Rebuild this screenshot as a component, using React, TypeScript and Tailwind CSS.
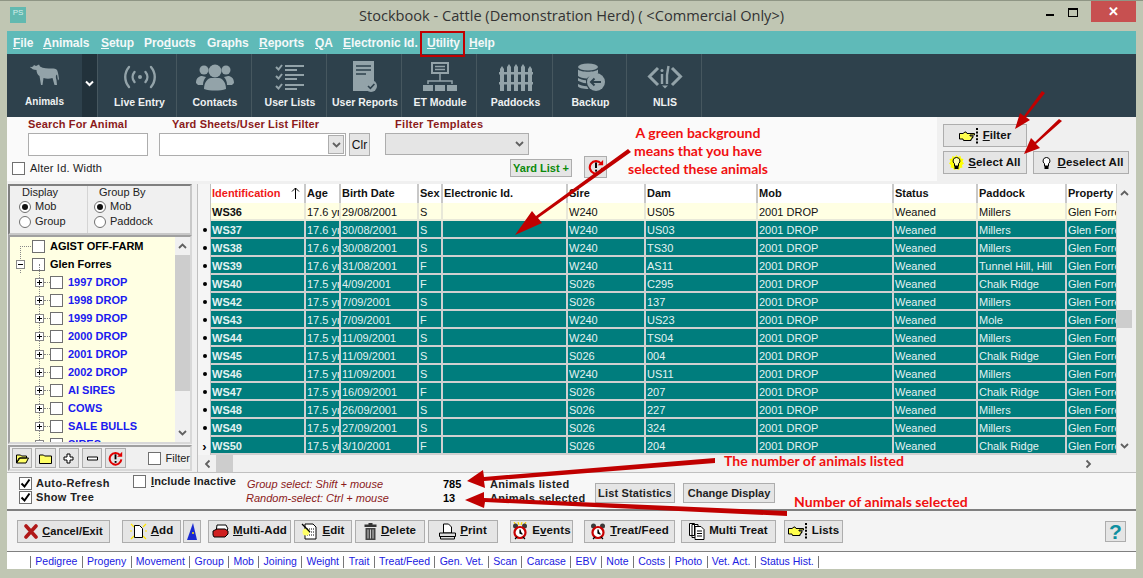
import React from "react";

const ICON = "#93a3a9";

function Cow() {
  return (
    <svg width="30" height="24" viewBox="0 0 30 24">
      <path fill={ICON} d="M0 3.500l3-1 1-1.500 2 1 3-1.500 1 2c3 2 8 2 12 2 2 0 4 0 5 1.500 1 2 1.500 5 2 9l-1 1.500-1-6-1 1c-.3 2 0 3 .5 4.500l.5 5h-2.500l-2-7c-3 1-6 1-9 0l-1 7H11l-1.500-9c-2-1-3-4-3-6-3 0-5-1-6.500-3.500z" />
    </svg>
  );
}
function Live() {
  return (
    <svg width="34" height="28" viewBox="0 0 34 28" fill="none" stroke={ICON} strokeWidth="2.4" strokeLinecap="round">
      <circle cx="17" cy="14" r="2" fill={ICON} stroke="none" />
      <path d="M11.500 9c-2.500 3-2.500 7 0 10M22.500 9c2.500 3 2.500 7 0 10" />
      <path d="M6 4c-5 6-5 14 0 20M28 4c5 6 5 14 0 20" />
    </svg>
  );
}
function Contacts() {
  return (
    <svg width="38" height="28" viewBox="0 0 38 28" fill={ICON}>
      <circle cx="8" cy="7" r="4.500" />
      <circle cx="30" cy="7" r="4.500" />
      <path d="M0 20c0-5 3-7 6-7l4 1c-2 2-3 5-3 8H2zM38 20c0-5-3-7-6-7l-4 1c2 2 3 5 3 8h5z" />
      <circle cx="19" cy="8" r="6.500" />
      <path d="M8 26c0-7 4-11 7-11h8c3 0 7 4 7 11-6 2-16 2-22 0z" />
    </svg>
  );
}
function UserLists() {
  return (
    <svg width="30" height="28" viewBox="0 0 30 28" fill="none" stroke={ICON} strokeWidth="1.800">
      <path d="M1 4l2.500 2.500L7 2M1 13l2.500 2.500L7 11M1 23l2.500 2.500L7 21" strokeWidth="2" />
      <path d="M10 3h19M10 7h12M10 12h19M10 16h12M10 22h19M10 26h12" />
    </svg>
  );
}
function UserReports() {
  return (
    <svg width="24" height="32" viewBox="0 0 24 32">
      <path fill={ICON} d="M0 0h21v20a8 8 0 0 0-6 10H0z" />
      <path stroke="#2e414c" strokeWidth="1.600" d="M3 5h15M3 9h15M3 13h10" />
      <circle cx="18" cy="25" r="6" fill={ICON} />
      <path fill="none" stroke="#2e414c" strokeWidth="1.600" d="M15 25l2.400 2.400 4-4.400" />
    </svg>
  );
}
function Et() {
  return (
    <svg width="34" height="30" viewBox="0 0 34 30">
      <rect x="9" y="1" width="16" height="10" fill="none" stroke={ICON} strokeWidth="2" />
      <path stroke={ICON} strokeWidth="1.400" d="M12 4.500h10M12 7.500h10" />
      <path fill="none" stroke={ICON} strokeWidth="1.500" d="M17 11v8M5 22v-3h24v3" />
      <rect x="0" y="23" width="10" height="6" fill={ICON} />
      <rect x="12" y="23" width="10" height="6" fill={ICON} />
      <rect x="24" y="23" width="10" height="6" fill={ICON} />
    </svg>
  );
}
function Fence() {
  return (
    <svg width="34" height="28" viewBox="0 0 34 28" fill={ICON}>
      <path d="M1 6l2-3 2 3v22H1zM8 4l2-3 2 3v24H8zM15 4l2-3 2 3v24h-4zM22 4l2-3 2 3v24h-4zM29 6l2-3 2 3v22h-4z" />
      <rect x="0" y="9" width="34" height="2.500" />
      <rect x="0" y="19" width="34" height="2.500" />
    </svg>
  );
}
function Backup() {
  return (
    <svg width="28" height="28" viewBox="0 0 28 28" fill={ICON}>
      <ellipse cx="11" cy="4" rx="10" ry="3.500" />
      <path d="M1 6.500c3 3 17 3 20 0v4c-5 1-10 3-11 5-4 0-7-1-9-2.500zM1 15c2 1 5 2 8 2.300 0 1 0 2 .2 3-3.400-.300-6.200-1.300-8.200-2.500zM1 21c2 1 5 2 9 2.300l1.500 2.700C6 26 1 25 1 23z" />
      <circle cx="19" cy="19" r="9" />
      <path fill="none" stroke="#2e414c" strokeWidth="2" d="M24 19H14M17.500 15.500L14 19l3.500 3.500" />
    </svg>
  );
}
function Nlis() {
  return (
    <svg width="36" height="24" viewBox="0 0 36 24" fill="none" stroke={ICON} strokeWidth="3">
      <path d="M11 3L2.500 11.500 11 20M25 3l8.500 8.500L25 20" />
      <path d="M15 9v10" strokeWidth="2.400" />
      <circle cx="15" cy="5.500" r="1.500" fill={ICON} stroke="none" />
      <path d="M21.500 1L20 10v9" strokeWidth="2.400" />
      <path d="M15 20.500l3 3 3-3z" fill={ICON} stroke="none" />
    </svg>
  );
}

function Hand() {
  return (
    <svg width="20" height="16" viewBox="0 0 20 16">
      <path fill="#ffff4d" stroke="#000" strokeWidth="1" d="M.5 5.500h3.500l2-1.500h1l1 1.500h7.500v1.500H11v1h3v1.500h-1v1.500h-1v1.500H4.500l-.5-1.500H.5z" />
      <path stroke="#000" strokeWidth="2" strokeDasharray="2 1.400" d="M18 0v16" />
    </svg>
  );
}
function Bulb({ on }: { on?: boolean }) {
  return (
    <svg width="15" height="16" viewBox="0 0 15 16">
      {on ? <path fill="#ffff00" d="M7.500 0l1.500 2 2.500-1 .5 2.500 2.500.5-1 2.500 1.500 2-2 1.500.5 2.500-2.500.5-1 2-2.500-1-2.500 1-1-2-2.500-.5.500-2.500-2-1.500 1.500-2-1-2.500 2.500-.5.500-2.500 2.500 1z" /> : null}
      <path fill={on ? "#ffffb0" : "#fff"} stroke="#000" d="M7.500 2.500a3.400 3.400 0 0 0-2 6.200V11h4V8.700a3.400 3.400 0 0 0-2-6.200z" />
      <rect x="5.500" y="11" width="4" height="3" fill="#000" />
    </svg>
  );
}
function RefreshAlert({ size = 18 }: { size?: number }) {
  return (
    <svg width={size} height={size} viewBox="0 0 18 18">
      <path fill="none" stroke="#e00000" strokeWidth="2.400" d="M14.500 5A7 7 0 1 0 16 10" />
      <path fill="#e00000" d="M17 1v6h-6z" />
      <path stroke="#000" strokeWidth="2.200" d="M9 4v6" />
      <rect x="8" y="12" width="2.200" height="2.200" fill="#000" />
    </svg>
  );
}
function Clock({ spark }: { spark?: boolean }) {
  return (
    <svg width="16" height="18" viewBox="0 0 16 18">
      {spark ? <path stroke="#ffd800" strokeWidth="1.200" d="M2 0l2 3M6 0l1 3M10 0L9 3M14 0l-2 3" /> : null}
      <circle cx="3.500" cy="4" r="2.500" fill="#3a3a3a" />
      <circle cx="12.500" cy="4" r="2.500" fill="#3a3a3a" />
      <circle cx="8" cy="10.500" r="5.500" fill="#fff" stroke="#c80000" strokeWidth="2.200" />
      <path stroke="#000" strokeWidth="1.200" d="M8 7.500v3.500l2.500 1.200M3 17l2-2M13 17l-2-2" />
    </svg>
  );
}
function BtnIcon({ kind }: { kind: string }) {
  if (kind === "x")
    return (
      <svg width="14" height="15" viewBox="0 0 14 15">
        <path stroke="#b01818" strokeWidth="3.600" strokeLinecap="round" d="M2 2l10 11M12 2L2 13" />
      </svg>
    );
  if (kind === "add")
    return (
      <svg width="17" height="17" viewBox="0 0 17 17">
        <path stroke="#ffe600" strokeWidth="1.200" d="M1 1l3 3M16 1l-3 3M1 16l3-3M16 16l-3-3M0 8h2M15 8h2" />
        <path fill="#fff" stroke="#000" d="M4.500 2.500h5l3 3v9h-8z" />
      </svg>
    );
  if (kind === "multi")
    return (
      <svg width="17" height="14" viewBox="0 0 17 14">
        <path fill="#fff" stroke="#000" d="M5 1h9l2 4-3 3H4z" />
        <path fill="#d02020" stroke="#000" d="M1 7l4-2h8l3 2v3l-3 3H2l-1-2z" />
      </svg>
    );
  if (kind === "edit")
    return (
      <svg width="17" height="17" viewBox="0 0 17 17">
        <path fill="#fff" stroke="#000" d="M4 1h8l3 3v12H4z" />
        <path stroke="#000" strokeDasharray="1 1" d="M6 6h7M6 9h7M6 12h7" />
        <circle cx="5" cy="9" r="3.500" fill="#ffff66" />
        <path stroke="#000" strokeWidth="1.300" d="M1 1l8 8" />
      </svg>
    );
  if (kind === "delete")
    return (
      <svg width="13" height="17" viewBox="0 0 13 17">
        <path fill="#333" d="M4.500 0h4v1.500h4V4H.5V1.500h4z" />
        <path fill="#444" d="M1.500 5h10v12h-10z" />
        <path stroke="#ccc" d="M4 6.500v9M6.500 6.500v9M9 6.500v9" />
      </svg>
    );
  if (kind === "print")
    return (
      <svg width="17" height="17" viewBox="0 0 17 17">
        <path fill="#fff" stroke="#000" d="M4.500 1h5l3 3v6h-8z" />
        <path fill="#ddd" stroke="#000" d="M.5 10h16v3.500H.5zM1.500 13.500h14V16h-14z" />
      </svg>
    );
  if (kind === "pages")
    return (
      <svg width="16" height="17" viewBox="0 0 16 17" fill="#fff" stroke="#000">
        <path d="M.5.500h5v12h-5zM3 1.500h6v13H3z" />
        <path d="M6 3.500h6l3 3v10H6z" />
        <path d="M8 8h5M8 10.500h5M8 13h5" />
      </svg>
    );
  return null;
}

function Chk({ on, className = "" }: { on?: boolean; className?: string }) {
  return (
    <span className={"inline-flex h-[13px] w-[13px] shrink-0 items-center justify-center border border-[#707070] bg-white " + className}>
      {on ? (
        <svg width="11" height="11" viewBox="0 0 11 11">
          <path fill="none" stroke="#000" strokeWidth="2" d="M1.500 5.500l3 3 5-7" />
        </svg>
      ) : null}
    </span>
  );
}
function Radio({ on, label }: { on?: boolean; label: string }) {
  return (
    <div className="flex h-[15px] items-center gap-[4px]">
      <span className="flex h-[12px] w-[12px] items-center justify-center rounded-full border border-[#707070] bg-white">
        {on ? <span className="h-[6px] w-[6px] rounded-full bg-[#111]" /> : null}
      </span>
      <span>{label}</span>
    </div>
  );
}

function U({ a, u, b }: { a?: string; u: string; b?: string }) {
  return (
    <>
      {a}
      <span className="underline underline-offset-1">{u}</span>
      {b}
    </>
  );
}

const menu: [string, string, string, string][] = [
  ["", "F", "ile", "w-[30px]"],
  ["", "A", "nimals", "w-[58px]"],
  ["", "S", "etup", "w-[43px]"],
  ["Pro", "d", "ucts", "w-[63px]"],
  ["Graphs", "", "", "w-[52px]"],
  ["", "R", "eports", "w-[56px]"],
  ["", "Q", "A", "w-[28px]"],
  ["", "E", "lectronic Id.", "w-[84px]"],
  ["", "U", "tility", "w-[42px]"],
  ["", "H", "elp", "w-[40px]"],
];

const tools: [string, React.ReactNode, string][] = [
  ["Live Entry", <Live />, "w-[79px] pl-[5px]"],
  ["Contacts", <Contacts />, "w-[75px] pl-[2px]"],
  ["User Lists", <UserLists />, "w-[75px] pl-[2px]"],
  ["User Reports", <UserReports />, "w-[75px] pl-[2px]"],
  ["ET Module", <Et />, "w-[75px] pl-[2px]"],
  ["Paddocks", <Fence />, "w-[76px] pl-[2px]"],
  ["Backup", <Backup />, "w-[74px] pl-[2px]"],
  ["NLIS", <Nlis />, "w-[75px] pl-[2px]"],
];

const rows: [string, string, string, string, string, string, string][] = [
  ["WS36", "17.6 yrs", "29/08/2001", "S", "W240", "US05", "Millers"],
  ["WS37", "17.6 yrs", "30/08/2001", "S", "W240", "US03", "Millers"],
  ["WS38", "17.6 yrs", "30/08/2001", "S", "W240", "TS30", "Millers"],
  ["WS39", "17.6 yrs", "31/08/2001", "F", "W240", "AS11", "Tunnel Hill, Hill"],
  ["WS40", "17.5 yrs", "4/09/2001", "F", "S026", "C295", "Chalk Ridge"],
  ["WS42", "17.5 yrs", "7/09/2001", "S", "S026", "137", "Millers"],
  ["WS43", "17.5 yrs", "7/09/2001", "F", "W240", "US23", "Mole"],
  ["WS44", "17.5 yrs", "11/09/2001", "S", "W240", "TS04", "Millers"],
  ["WS45", "17.5 yrs", "11/09/2001", "S", "S026", "004", "Chalk Ridge"],
  ["WS46", "17.5 yrs", "11/09/2001", "S", "W240", "US11", "Millers"],
  ["WS47", "17.5 yrs", "16/09/2001", "F", "S026", "207", "Chalk Ridge"],
  ["WS48", "17.5 yrs", "26/09/2001", "S", "S026", "227", "Millers"],
  ["WS49", "17.5 yrs", "27/09/2001", "S", "S026", "324", "Millers"],
  ["WS50", "17.5 yrs", "3/10/2001", "F", "S026", "204", "Chalk Ridge"],
];

const COLS = "grid grid-cols-[13px_95px_35px_78px_24px_125px_78px_112px_136px_84px_89px_51px]";
const heads = ["Identification", "Age", "Birth Date", "Sex", "Electronic Id.", "Sire", "Dam", "Mob", "Status", "Paddock", "Property"];

const tree = ["1997 DROP", "1998 DROP", "1999 DROP", "2000 DROP", "2001 DROP", "2002 DROP", "AI SIRES", "COWS", "SALE BULLS", "SIRES"];
const links = ["Pedigree", "Progeny", "Movement", "Group", "Mob", "Joining", "Weight", "Trait", "Treat/Feed", "Gen. Vet.", "Scan", "Carcase", "EBV", "Note", "Costs", "Photo", "Vet. Act.", "Status Hist."];

const BTN = "flex h-[23px] items-center justify-center gap-[4px] border border-[#adadad] bg-[#e5e5e5] font-bold text-[#111] text-[11.5px] tracking-[0.1px]";

function Chevron({ up }: { up?: boolean }) {
  return (
    <svg width="9" height="6" viewBox="0 0 9 6">
      <path fill="none" stroke="#606060" strokeWidth="1.800" d={up ? "M1 5l3.500-3.500L8 5" : "M1 1l3.500 3.500L8 1"} />
    </svg>
  );
}

function PlusBox({ minus }: { minus?: boolean }) {
  return (
    <span className="relative flex h-[9px] w-[9px] shrink-0 items-center justify-center border border-[#888] bg-white">
      <span className="h-px w-[5px] bg-black" />
      {minus ? null : <span className="absolute h-[5px] w-px bg-black" />}
    </span>
  );
}

export default function App() {
  return (
    <div className="relative flex h-[578px] w-[1143px] flex-col overflow-hidden bg-[#c0c6b3] font-['Liberation_Sans',sans-serif] text-[11px] text-[#111]">
      {/* Title bar */}
      <div className="relative flex h-[31px] shrink-0 items-center justify-center border-t border-[#8f9685]">
        <span className="absolute left-[10px] top-[6px] flex h-[16px] w-[16px] items-start justify-center bg-[#62b9b0] text-[8px] leading-[12px] text-[#d5eeea]">PS</span>
        <span className="font-['Open_Sans',sans-serif] text-[14.6px] text-[#333]">Stockbook - Cattle (Demonstration Herd) ( &lt;Commercial Only&gt;)</span>
        <div className="absolute right-[7px] top-0 flex h-[21px] items-start">
          <span className="mr-[14px] mt-[13px] h-[2px] w-[8px] bg-black" />
          <span className="mr-[13px] mt-[7px] h-[9px] w-[10px] border border-t-2 border-black" />
          <span className="flex h-[21px] w-[45px] items-center justify-center bg-[#c75050] text-[13px] font-bold text-white">✕</span>
        </div>
      </div>

      <div className="mx-[7px] flex w-[1129px] flex-col">
        {/* Menu */}
        <div className="flex h-[23px] items-center bg-[#5fbab8] pl-[6px] text-[12px] font-bold tracking-[-0.05px] text-[#f3f8f8]">
          {menu.map(([a, u, b, w], i) => (
            <span key={i} className={w + " whitespace-nowrap"}>
              {u ? <U a={a} u={u} b={b} /> : a}
            </span>
          ))}
        </div>

        {/* Toolbar */}
        <div className="flex h-[63px] bg-[#2e414c] text-[10.5px] font-bold text-[#eef1f2]">
          <div className="flex w-[75px] flex-col items-center pt-[10px]">
            <div className="flex h-[24px] items-center"><Cow /></div>
            <span className="mt-[6px] text-[10px]">Animals</span>
          </div>
          <div className="flex w-[16px] items-center justify-center border-r border-[#46575f] bg-[#22323b] pb-[5px]">
            <svg width="9" height="7" viewBox="0 0 9 7"><path fill="none" stroke="#fff" strokeWidth="2" d="M1 1.500l3.500 3.500L8 1.500" /></svg>
          </div>
          {tools.map(([label, icon, w]) => (
            <div key={label} className={w + " flex flex-col items-center border-r border-[#46575f] pt-[5px]"}>
              <div className="flex h-[35px] items-center justify-center">{icon}</div>
              <span className="mt-[1px] whitespace-nowrap">{label}</span>
            </div>
          ))}
        </div>

        {/* Filter panel */}
        <div className="flex h-[64px] bg-[#fafafa]">
          <div className="flex w-[930px] flex-col">
            <div className="flex pl-[21px]">
              <div className="w-[131px]">
                <div className="h-[16px] text-[11px] font-bold leading-[15px] tracking-[0.15px] text-[#8b1a1a]">Search For Animal</div>
                <div className="h-[23px] w-[120px] border border-[#adadad] bg-white" />
              </div>
              <div className="w-[226px]">
                <div className="h-[16px] pl-[13px] text-[11px] font-bold leading-[15px] tracking-[0.15px] text-[#8b1a1a]">Yard Sheets/User List Filter</div>
                <div className="flex">
                  <div className="flex h-[23px] w-[187px] items-center justify-end border border-[#adadad] bg-white pr-[1px]">
                    <span className="flex h-[19px] w-[16px] items-center justify-center border border-[#adadad] bg-[#e5e5e5]"><Chevron /></span>
                  </div>
                  <div className="ml-[3px] flex h-[23px] w-[21px] items-center justify-center border border-[#adadad] bg-[#e5e5e5] text-[12px]">Clr</div>
                </div>
              </div>
              <div>
                <div className="h-[16px] pl-[10px] text-[11px] font-bold leading-[15px] tracking-[0.3px] text-[#8b1a1a]">Filter Templates</div>
                <div className="flex h-[22px] w-[144px] items-center justify-end border border-[#adadad] bg-[#e5e5e5] pr-[4px]"><Chevron /></div>
              </div>
            </div>
            <div className="flex items-start">
              <div className="ml-[5px] mt-[4px] flex items-center gap-[5px] text-[#222]">
                <Chk />
                <span className="tracking-[0.2px]">Alter Id. Width</span>
              </div>
              <div className="ml-[408px] mt-[3px] flex h-[18px] w-[62px] items-center justify-center border border-[#adadad] bg-[#e5e5e5] font-bold text-[#0a8a0a]">Yard List +</div>
              <div className="ml-[12px] flex h-[22px] w-[23px] items-center justify-center border border-[#adadad] bg-[#e5e5e5]"><RefreshAlert size={16} /></div>
            </div>
          </div>
          <div className="flex w-[199px] flex-col bg-[#f0f0f0] pl-[6px] pt-[7px]">
            <div className={BTN + " w-[84px] pt-[1px]"}><Hand /><span><U u="F" b="ilter" /></span></div>
            <div className="mt-[4px] flex gap-[6px]">
              <div className={BTN + " w-[84px]"}><Bulb on /><span><U u="S" b="elect All" /></span></div>
              <div className={BTN + " w-[96px]"}><Bulb /><span><U u="D" b="eselect All" /></span></div>
            </div>
          </div>
        </div>

        {/* Main */}
        <div className="flex h-[291px] bg-[#f0f0f0] pt-[3px]">
          <div className="ml-[1px] flex w-[184px] flex-col">
            <div className="flex h-[51px] border-2 border-[#808080] border-r-[#c8c8c8] border-b-[#c8c8c8] pl-[9px] text-[#222]">
              <div className="w-[68px]">
                <div className="h-[13px] pl-[3px] leading-[13px]">Display</div>
                <Radio on label="Mob" />
                <Radio label="Group" />
              </div>
              <div className="border-l border-[#d4d4d4] pl-[6px]">
                <div className="h-[13px] pl-[5px] leading-[13px]">Group By</div>
                <Radio on label="Mob" />
                <Radio label="Paddock" />
              </div>
            </div>
            <div className="flex h-[209px] border-2 border-[#a0a0a0] border-r-[#d8d8d8] border-b-[#d8d8d8]">
              <div className="relative h-full w-[165px] overflow-hidden bg-[#ffffe3] font-bold leading-[18px]">
                <span className="absolute left-[10px] top-[9px] h-[27px] border-l border-dotted border-[#888]" />
                <span className="absolute left-[29px] top-[27px] h-[180px] border-l border-dotted border-[#888]" />
                <div className="flex h-[18px] items-center pl-[10px] text-black">
                  <span className="mr-[1px] w-[11px] border-t border-dotted border-[#888]" />
                  <Chk className="mr-[5px]" />AGIST OFF-FARM
                </div>
                <div className="flex h-[18px] items-center pl-[6px] text-black">
                  <PlusBox minus />
                  <span className="w-[7px]" />
                  <Chk className="mr-[5px]" />Glen Forres
                </div>
                {tree.map((t) => (
                  <div key={t} className="flex h-[18px] items-center pl-[25px] text-[#1a1af0]">
                    <PlusBox />
                    <span className="w-[6px] border-t border-dotted border-[#888]" />
                    <Chk className="mr-[5px]" />{t}
                  </div>
                ))}
              </div>
              <div className="flex w-[15px] flex-col bg-[#f0f0f0]">
                <div className="flex h-[18px] items-center justify-center"><Chevron up /></div>
                <div className="h-[136px] bg-[#cdcdcd]" />
                <div className="flex-1" />
                <div className="flex h-[18px] items-center justify-center"><Chevron /></div>
              </div>
            </div>
            <div className="mt-[1px] flex h-[26px] items-center border-2 border-[#a0a0a0] border-r-[#d8d8d8] border-b-[#d8d8d8] pl-[2px]">
              {["open", "folder", "plus", "minus", "refresh"].map((k) => (
                <div key={k} className="mr-[3px] flex h-[20px] w-[21px] items-center justify-center border border-[#adadad] bg-[#e5e5e5]">
                  {k === "open" || k === "folder" ? (
                    <svg width="13" height="11" viewBox="0 0 13 11"><path fill="#ffff66" stroke="#000" d={k === "open" ? "M.5 2h4l1 1h5v2H4L.5 10zM.5 10L3 5h9.500L10 10z" : "M.5 2h4l1 1h7v7.500H.5z"} /></svg>
                  ) : k === "plus" ? (
                    <svg width="11" height="11" viewBox="0 0 11 11"><path fill="#fff" stroke="#000" d="M4 1h3v3h3v3H7v3H4V7H1V4h3z" /></svg>
                  ) : k === "minus" ? (
                    <svg width="11" height="5" viewBox="0 0 11 5"><path fill="#fff" stroke="#000" d="M.5 1h10v3H.5z" /></svg>
                  ) : (
                    <RefreshAlert size={15} />
                  )}
                </div>
              ))}
              <Chk className="ml-[19px]" />
              <span className="ml-[5px] text-[#222]">Filter</span>
            </div>
          </div>

          {/* Grid */}
          <div className="ml-[5px] flex h-[288px] w-[935px] flex-col border-l border-[#c0c0c0]">
            <div className="flex h-[271px]">
              <div className="w-[920px] overflow-hidden">
                <div className={COLS + " h-[19px] bg-white font-bold leading-[19px]"}>
                  <div className="border-r border-[#c0c0c0] bg-[#f5f5f5]" />
                  {heads.map((h, i) => (
                    <div key={h} className={(i === 0 ? "flex justify-between pr-[4px] text-[#f01818] " : "text-[#111] ") + "overflow-hidden whitespace-nowrap border-r-2 border-[#c8c8c8] pl-[1px]"}>
                      <span>{h}</span>
                      {i === 0 ? (
                        <svg className="mt-[3px]" width="9" height="12" viewBox="0 0 9 12"><path fill="none" stroke="#000" d="M4.500 12V1M1 4.500L4.500 1 8 4.500" /></svg>
                      ) : null}
                    </div>
                  ))}
                </div>
                {rows.map((r, i) => {
                  const first = i === 0;
                  const cell =
                    "overflow-hidden whitespace-nowrap border-r-2 border-b-2 pl-[1px] leading-[18px] " +
                    (first ? "border-[#e8e8d8] bg-[#ffffe3] text-[#111]" : "border-[#d0d0d0] bg-[#007d7d] text-[#e4f2f2]");
                  return (
                    <div key={r[0]} className={COLS + " h-[18px]"}>
                      <div className="flex items-center justify-center border-r border-[#c0c0c0] bg-[#f5f5f5] pl-[1px] text-black">
                        {first ? null : i === 13 ? (
                          <span className="text-[13px] font-bold leading-none">›</span>
                        ) : (
                          <span className="h-[4px] w-[4px] rounded-full bg-black" />
                        )}
                      </div>
                      <div className={cell + " font-bold"}>{r[0]}</div>
                      <div className={cell}>{r[1]}</div>
                      <div className={cell}>{r[2]}</div>
                      <div className={cell}>{r[3]}</div>
                      <div className={cell} />
                      <div className={cell}>{r[4]}</div>
                      <div className={cell}>{r[5]}</div>
                      <div className={cell}>2001 DROP</div>
                      <div className={cell}>Weaned</div>
                      <div className={cell}>{r[6]}</div>
                      <div className={cell}>Glen Forres</div>
                    </div>
                  );
                })}
              </div>
              <div className="flex w-[15px] flex-col bg-[#f0f0f0]">
                <div className="flex h-[18px] items-center justify-center"><Chevron up /></div>
                <div className="mt-[108px] h-[18px] bg-[#cdcdcd]" />
                <div className="flex-1" />
                <div className="flex h-[18px] items-center justify-center"><Chevron /></div>
              </div>
            </div>
            <div className="flex h-[17px] items-center bg-[#f0f0f0]">
              <div className="flex w-[18px] items-center justify-center"><span className="rotate-90"><Chevron /></span></div>
              <div className="h-full w-[17px] bg-[#cdcdcd]" />
              <div className="flex-1" />
              <div className="flex w-[48px] items-center justify-start"><span className="rotate-[-90deg]"><Chevron /></span></div>
            </div>
          </div>
        </div>

        {/* Status row */}
        <div className="flex h-[39px] border-y border-b-2 border-t-[#c0c0c0] border-b-[#808080] bg-[#f7f7f7] pl-[12px] font-bold text-[#222]">
          <div className="w-[114px] pt-[3px]">
            <div className="flex h-[14px] items-center gap-[4px] tracking-[0.35px]"><Chk on />Auto-Refresh</div>
            <div className="flex h-[14px] items-center gap-[4px] tracking-[0.35px]"><Chk on />Show Tree</div>
          </div>
          <div className="flex w-[114px] items-start gap-[5px] pt-[1px]">
            <Chk className="mt-[1px]" />
            <span className="whitespace-nowrap leading-[15px] tracking-[0.15px]"><U u="I" b="nclude Inactive" /></span>
          </div>
          <div className="w-[196px] pt-[4px] text-[11px] font-normal italic leading-[14px] text-[#8b1a1a]">
            <div>Group select: Shift + mouse</div>
            <div className="-ml-[1px]">Random-select: Ctrl + mouse</div>
          </div>
          <div className="w-[47px] pt-[4px] leading-[14px] text-black">
            <div>785</div>
            <div>13</div>
          </div>
          <div className="w-[105px] pt-[4px] leading-[14px] tracking-[0.35px]">
            <div>Animals listed</div>
            <div className="whitespace-nowrap">Animals selected</div>
          </div>
          <div className="mt-[10px] flex h-[20px] w-[80px] items-center justify-center border border-[#adadad] bg-[#e5e5e5] tracking-[0.15px]">List Statistics</div>
          <div className="ml-[8px] mt-[10px] flex h-[20px] w-[92px] items-center justify-center border border-[#adadad] bg-[#e5e5e5]">Change Display</div>
        </div>

        {/* Buttons */}
        <div className="flex h-[41px] items-center border-b border-[#808080] bg-[#f4f4f4] pl-[10px]">
          <div className={BTN + " w-[93px]"}><BtnIcon kind="x" /><span className="text-[11px]"><U u="C" b="ancel/Exit" /></span></div>
          <div className={BTN + " ml-[12px] w-[59px]"}><BtnIcon kind="add" /><span><U u="A" b="dd" /></span></div>
          <div className={BTN + " ml-[2px] w-[18px]"}>
            <svg width="10" height="17" viewBox="0 0 10 17"><path fill="#1a2ad0" d="M6 0l4 17H0z" /><circle cx="6" cy="10" r="1" fill="#ffe600" /></svg>
          </div>
          <div className={BTN + " ml-[7px] w-[83px]"}><BtnIcon kind="multi" /><span><U u="M" b="ulti-Add" /></span></div>
          <div className={BTN + " ml-[3px] w-[58px] border-[#4a9be0]"}><BtnIcon kind="edit" /><span><U u="E" b="dit" /></span></div>
          <div className={BTN + " ml-[3px] w-[70px]"}><BtnIcon kind="delete" /><span><U u="D" b="elete" /></span></div>
          <div className={BTN + " ml-[3px] w-[70px]"}><BtnIcon kind="print" /><span><U u="P" b="rint" /></span></div>
          <div className={BTN + " ml-[12px] w-[63px]"}><Clock spark /><span><U a="E" u="v" b="ents" /></span></div>
          <div className={BTN + " ml-[11px] w-[91px]"}><Clock /><span><U u="T" b="reat/Feed" /></span></div>
          <div className={BTN + " ml-[6px] w-[95px]"}><BtnIcon kind="pages" /><span>Multi Treat</span></div>
          <div className={BTN + " ml-[8px] w-[59px]"}><Hand /><span>Lists</span></div>
          <div className="ml-[262px] flex h-[21px] w-[21px] items-center justify-center border border-[#adadad] bg-[#e5e5e5] text-[21px] font-bold leading-none text-[#0e8fa0]">?</div>
        </div>

        {/* Links */}
        <div className="flex h-[17px] items-center bg-white pl-[23px] pt-[3px] text-[10.5px] text-[#2020e0]">
          <span className="h-[12px] border-l border-[#777]" />
          {links.map((l) => (
            <span key={l} className="flex h-[12px] items-center whitespace-nowrap border-r border-[#777] px-[4.35px]">{l}</span>
          ))}
        </div>
      </div>

      {/* Annotations that lie over the window */}
      <div className="absolute left-[420px] top-[31px] h-[26px] w-[45px] border-[2px] border-[#c00000]" />
      <div className="absolute left-[615px] top-[124px] w-[166px] text-center font-['Lato',sans-serif] text-[14px] font-bold leading-[18px] text-[#f01010]">
        A green background<br />means that you have<br />selected these animals
      </div>
      <div className="absolute left-[724px] top-[452px] font-['Lato',sans-serif] text-[14px] font-bold leading-[18px] tracking-[0.05px] text-[#f01010]">The number of animals listed</div>
      <div className="absolute left-[794px] top-[493px] font-['Lato',sans-serif] text-[14px] font-bold leading-[18px] tracking-[0.05px] text-[#f01010]">Number of animals selected</div>
      <svg className="pointer-events-none absolute left-0 top-0" width="1143" height="578" viewBox="0 0 1143 578">
        <g fill="#c00000">
          <path d="M1042 91l3 2-19 24 4 3-15 9 5-16 4 3z" />
          <path d="M1059 119l3 2-26 23 4 4-16 6 7-16 4 4z" />
          <path d="M628 149l3 3-93 66 4 5-27 12 17-24 4 5z" />
          <path d="M715 458l0 5-231 18 1 7-18-7 16-11 1 7z" />
          <path d="M787 511v5l-302-14-1 6-19-8 19-8v6z" />
        </g>
      </svg>
    </div>
  );
}
